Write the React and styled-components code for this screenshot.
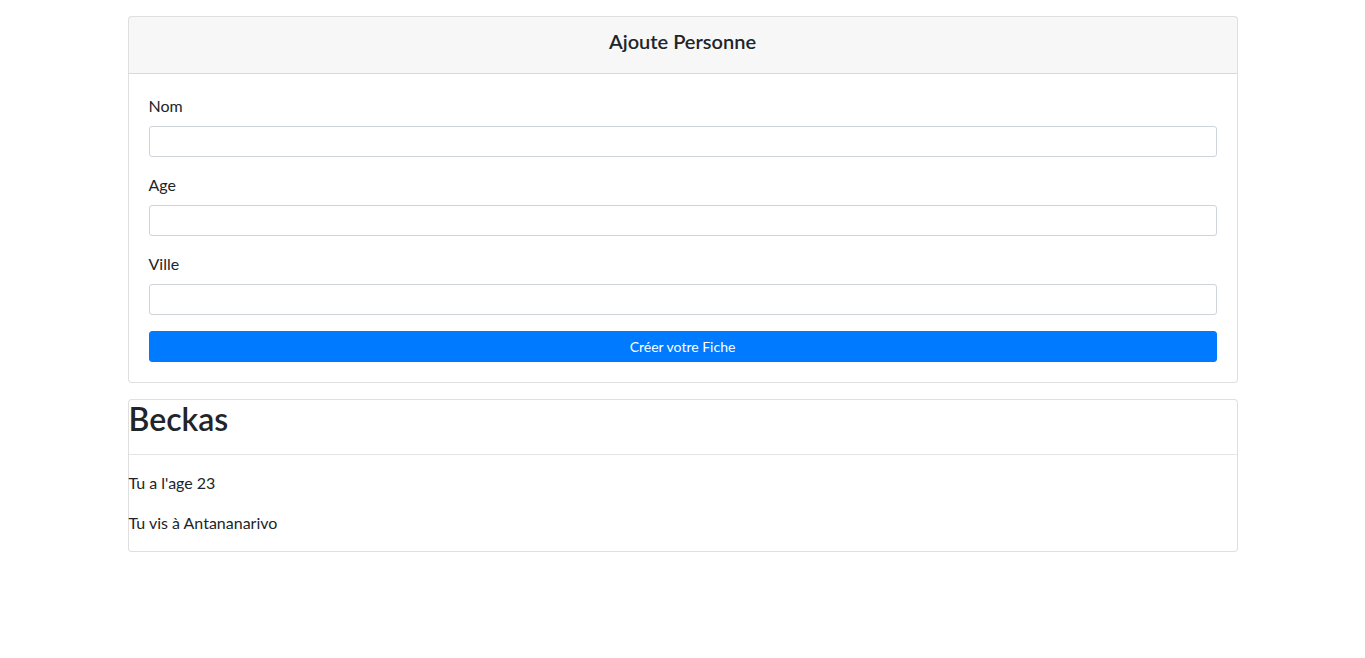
import styled, { createGlobalStyle } from 'styled-components';

const GlobalStyle = createGlobalStyle`
  *, *::before, *::after { box-sizing: border-box; }
  body {
    margin: 0;
    font-family: "Segoe UI", Lato, "Noto Sans", sans-serif;
    font-size: 16px;
    line-height: 1.5;
    color: #212529;
    background: #fff;
  }
`;

const Container = styled.div`
  max-width: 1140px;
  margin: 0 auto;
  padding: 0 15px;
`;

const Card = styled.div`
  margin-top: 16px;
  border: 1px solid rgba(0, 0, 0, 0.125);
  border-radius: 4px;
  background: #fff;
`;

const CardHeader = styled.div`
  padding: 12px 20px;
  background: rgba(0, 0, 0, 0.03);
  border-bottom: 1px solid rgba(0, 0, 0, 0.125);
  text-align: center;
`;

const HeaderTitle = styled.h5`
  margin: 0 0 8px;
  font-size: 20px;
  font-weight: 600;
  line-height: 1.2;
`;

const CardBody = styled.form`
  padding: 20px;
`;

const FormGroup = styled.div`
  margin-bottom: 16px;
`;

const Label = styled.label`
  display: block;
  margin-bottom: 8px;
`;

const Input = styled.input`
  display: block;
  width: 100%;
  height: 31px;
  padding: 4px 8px;
  font-size: 14px;
  font-family: inherit;
  color: #495057;
  border: 1px solid #ced4da;
  border-radius: 3px;
  outline: none;
`;

const SubmitButton = styled.button`
  display: block;
  width: 100%;
  height: 31px;
  padding: 4px 8px;
  font-family: inherit;
  font-size: 14px;
  line-height: 1.5;
  color: #fff;
  background: #007bff;
  border: 1px solid #007bff;
  border-radius: 3px;
  cursor: pointer;
`;

const Name = styled.h2`
  margin: 0 0 8px;
  font-size: 32px;
  font-weight: 600;
  line-height: 1.2;
`;

const Rule = styled.hr`
  margin: 16px 0;
  border: 0;
  border-top: 1px solid rgba(0, 0, 0, 0.1);
`;

const Line = styled.p`
  margin: 0 0 16px;
`;

const fields = ['Nom', 'Age', 'Ville'];

export default function App() {
  return (
    <>
      <GlobalStyle />
      <Container>
        <Card>
          <CardHeader>
            <HeaderTitle>Ajoute Personne</HeaderTitle>
          </CardHeader>
          <CardBody onSubmit={(e) => e.preventDefault()}>
            {fields.map((f) => (
              <FormGroup key={f}>
                <Label>{f}</Label>
                <Input type="text" />
              </FormGroup>
            ))}
            <SubmitButton type="submit">Créer votre Fiche</SubmitButton>
          </CardBody>
        </Card>
        <Card>
          <Name>Beckas</Name>
          <Rule />
          <Line>Tu a l'age 23</Line>
          <Line>Tu vis à Antananarivo</Line>
        </Card>
      </Container>
    </>
  );
}
